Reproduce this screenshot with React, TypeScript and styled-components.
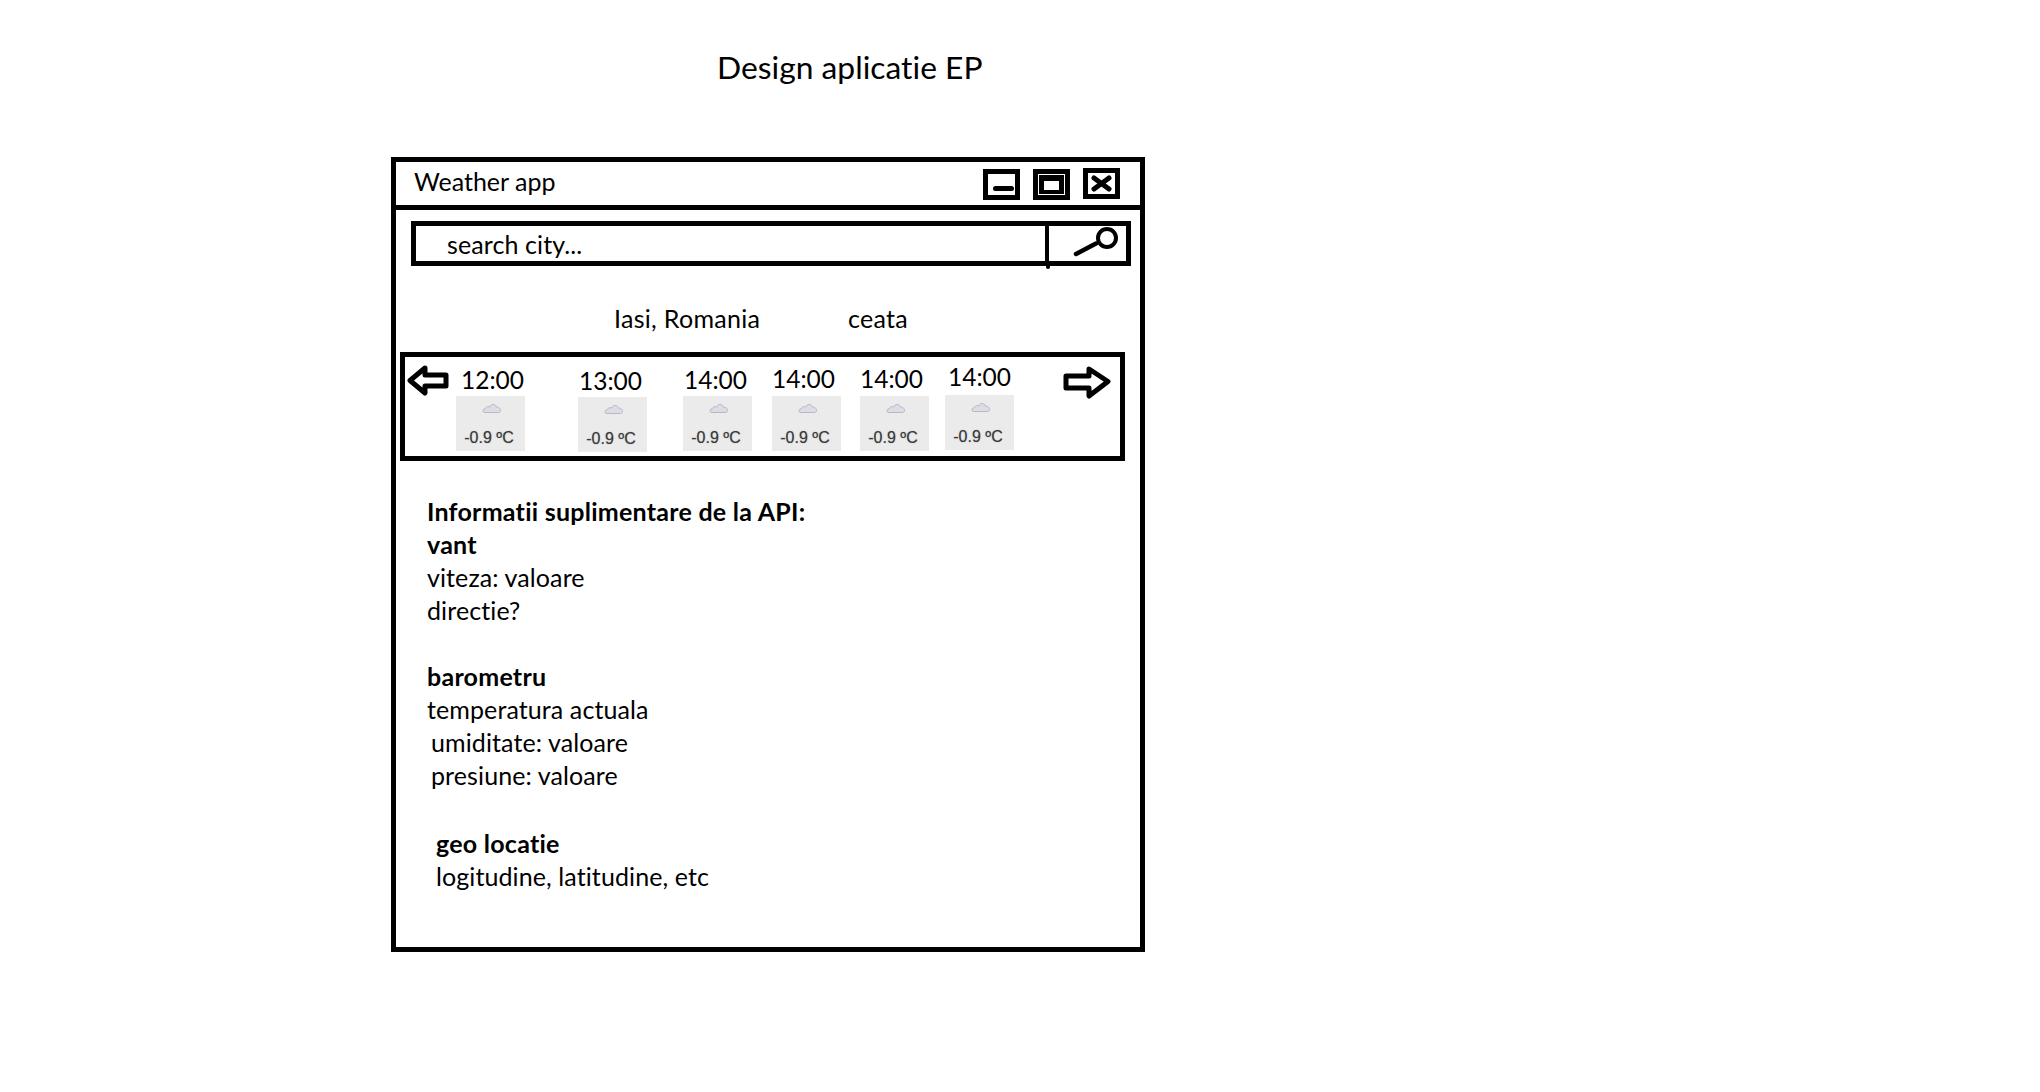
import React from "react";
import styled, { createGlobalStyle } from "styled-components";

const Global = createGlobalStyle`
  html, body { margin: 0; padding: 0; background: #fff; }
  body { font-family: "Lato", "Liberation Sans", sans-serif; color: #000; font-variant-ligatures: none; }
`;
const Page = styled.div`width: 2040px; height: 1092px; overflow: hidden; background: #fff;`;
const Heading = styled.h1`
  margin: 0; padding: 48px 0 0 717px; height: 157px; box-sizing: border-box;
  font-size: 31.8px; line-height: 38px; font-weight: 400; white-space: nowrap;
`;
const Window = styled.div`
  width: 754px; height: 795px; margin-left: 391px; box-sizing: border-box; border: 5px solid #000;
`;
const TitleBar = styled.div`
  height: 48px; box-sizing: border-box; border-bottom: 5px solid #000; display: flex; align-items: flex-start;
  padding-left: 18px; font-size: 25px;
`;
const TitleText = styled.span`flex: 1; line-height: 38px; letter-spacing: 0px; white-space: nowrap;`;
const Controls = styled.div`display: flex; gap: 13px; margin: 7px 20px 0 0;`;
const Control = styled.svg<{ $lift?: number }>`display: block; width: 37px; height: 31px; margin-top: ${(p) => -(p.$lift ?? 0)}px;`;
const SearchBar = styled.div`
  display: flex; height: 45px; width: 720px; margin: 11px 0 0 15px; box-sizing: border-box;
  border: 5px solid #000; position: relative;
`;
const SearchText = styled.div`
  flex: 1; padding-left: 31px; font-size: 25px; line-height: 37px; letter-spacing: 0.1px;
  border-right: 4px solid #000;
`;
const SearchButton = styled.div`width: 77px; flex: none;`;
const Tail = styled.span`position: absolute; right: 76px; bottom: -8px; width: 4px; height: 4px; background: #000; border-radius: 0 0 2px 2px;`;
const Location = styled.div`
  display: flex; margin: 36px 0 0 218px; font-size: 25px; line-height: 32px; letter-spacing: 0.3px;
`;
const LocationName = styled.span`width: 234px; white-space: nowrap;`;
const Band = styled.div`
  display: flex; align-items: flex-start; position: relative; box-sizing: border-box; height: 109px; width: 725px;
  margin: 18px 0 0 4px; border: 5px solid #000;
`;
const Arrow = styled.svg<{ $left: number; $top: number }>`
  position: absolute; left: ${(p) => p.$left}px; top: ${(p) => p.$top}px;
`;
const Cell = styled.div<{ $left: number; $top: number }>`
  width: 69px; margin-left: ${(p) => p.$left}px; margin-top: ${(p) => p.$top}px; flex: none;
`;
const Time = styled.div<{ $shift: number; $box: number }>`
  font-size: 24.5px; line-height: 30px; height: ${(p) => p.$box}px;
  margin-left: ${(p) => p.$shift}px; white-space: nowrap;
`;
const Tile = styled.div`
  height: 55px; background: #ebebeb; display: flex; flex-direction: column; align-items: center; padding-top: 5px; box-sizing: border-box;
`;
const Cloud = styled.svg`display: block; width: 20px; height: 13px; margin-left: 2px;`;
const Temp = styled.div`
  font-family: "Liberation Sans", sans-serif; font-size: 16px; line-height: 16px; color: #3a3a3a; margin: 16px 3px 0 0; white-space: nowrap;
  text-shadow: 0 0 1px rgba(60, 60, 60, 0.5);
`;
const Info = styled.div`margin: 34px 0 0 31px; font-size: 25px; line-height: 33px; letter-spacing: 0.1px; white-space: nowrap;`;
const Line = styled.div<{ $bold?: boolean; $indent?: number; $after?: number }>`
  font-weight: ${(p) => (p.$bold ? 700 : 400)};
  letter-spacing: ${(p) => (p.$bold ? "0.25px" : "inherit")};
  padding-left: ${(p) => p.$indent ?? 0}px;
  margin-bottom: ${(p) => p.$after ?? 0}px;
`;

const LeftArrow = () => (
  <Arrow $left={2} $top={8} width="42" height="32" viewBox="0 0 42 32">
    <path d="M18 3 L3 15.5 L18 28 L18 21 L39 21 L39 10 L18 10 Z" fill="#fff" stroke="#000" strokeWidth="5" strokeLinejoin="round" />
  </Arrow>
);
const RightArrow = () => (
  <Arrow $left={658} $top={9} width="48" height="33" viewBox="0 0 48 33">
    <path d="M26 3 L45 15.5 L26 30 L26 22 L3 22 L3 10 L26 10 Z" fill="#fff" stroke="#000" strokeWidth="5" strokeLinejoin="round" />
  </Arrow>
);

const CloudIcon = () => (
  <Cloud viewBox="0 0 20 13">
    <path d="M2 11.5 C0.4 11 0.6 7.8 3.4 7.6 C4 5.6 6.4 5.2 7.8 6 C8.8 2.6 13.6 2.6 14.6 6.2 C17 6 19.4 8 18.4 10.4 C18 11.4 17 11.5 16 11.5 Z" fill="#dcdce4" stroke="#b9b9c6" strokeWidth="1" />
  </Cloud>
);

const hours = [
  { time: "12:00", left: 51, top: 8, shift: 5, box: 31 },
  { time: "13:00", left: 53, top: 9, shift: 1, box: 31 },
  { time: "14:00", left: 36, top: 8, shift: 1, box: 31 },
  { time: "14:00", left: 20, top: 7, shift: 0, box: 32 },
  { time: "14:00", left: 19, top: 7, shift: 0, box: 32 },
  { time: "14:00", left: 16, top: 5, shift: 3, box: 33 },
];

export default function App() {
  return (
    <Page>
      <Global />
      <Heading>Design aplicatie EP</Heading>
      <Window>
        <TitleBar>
          <TitleText>Weather app</TitleText>
          <Controls>
            <Control viewBox="0 0 37 31">
              <rect x="2.5" y="2.5" width="32" height="26" fill="#fff" stroke="#000" strokeWidth="5" />
              <rect x="10" y="17" width="21" height="5" rx="2.5" fill="#000" />
            </Control>
            <Control viewBox="0 0 37 31">
              <rect width="37" height="31" fill="#000" />
              <rect x="5.5" y="5.5" width="26" height="20" fill="none" stroke="#fff" strokeWidth="1" />
              <rect x="11" y="12" width="15" height="9" fill="#fff" />
            </Control>
            <Control viewBox="0 0 37 31" $lift={1}>
              <rect x="2.5" y="2.5" width="32" height="26" fill="#fff" stroke="#000" strokeWidth="5" />
              <path d="M11 10 L26 21 M26 10 L11 21" stroke="#000" strokeWidth="5" strokeLinecap="round" />
            </Control>
          </Controls>
        </TitleBar>
        <SearchBar>
          <SearchText>search city...</SearchText>
          <SearchButton>
            <svg width="77" height="35" viewBox="0 0 77 35">
              <circle cx="58" cy="12" r="9" fill="none" stroke="#000" strokeWidth="4" />
              <path d="M47 17.5 L27 28" stroke="#000" strokeWidth="4.5" strokeLinecap="round" />
            </svg>
          </SearchButton>
          <Tail />
        </SearchBar>
        <Location>
          <LocationName>Iasi, Romania</LocationName>
          <span>ceata</span>
        </Location>
        <Band>
          <LeftArrow />
          {hours.map((h, i) => (
            <Cell key={i} $left={h.left} $top={h.top}>
              <Time $shift={h.shift} $box={h.box}>{h.time}</Time>
              <Tile>
                <CloudIcon />
                <Temp>-0.9 ºC</Temp>
              </Tile>
            </Cell>
          ))}
          <RightArrow />
        </Band>
        <Info>
          <Line $bold>Informatii suplimentare de la API:</Line>
          <Line $bold>vant</Line>
          <Line>viteza: valoare</Line>
          <Line $after={33}>directie?</Line>
          <Line $bold>barometru</Line>
          <Line>temperatura actuala</Line>
          <Line $indent={4}>umiditate: valoare</Line>
          <Line $indent={4} $after={35}>presiune: valoare</Line>
          <Line $bold $indent={9}>geo locatie</Line>
          <Line $indent={9}>logitudine, latitudine, etc</Line>
        </Info>
      </Window>
    </Page>
  );
}
